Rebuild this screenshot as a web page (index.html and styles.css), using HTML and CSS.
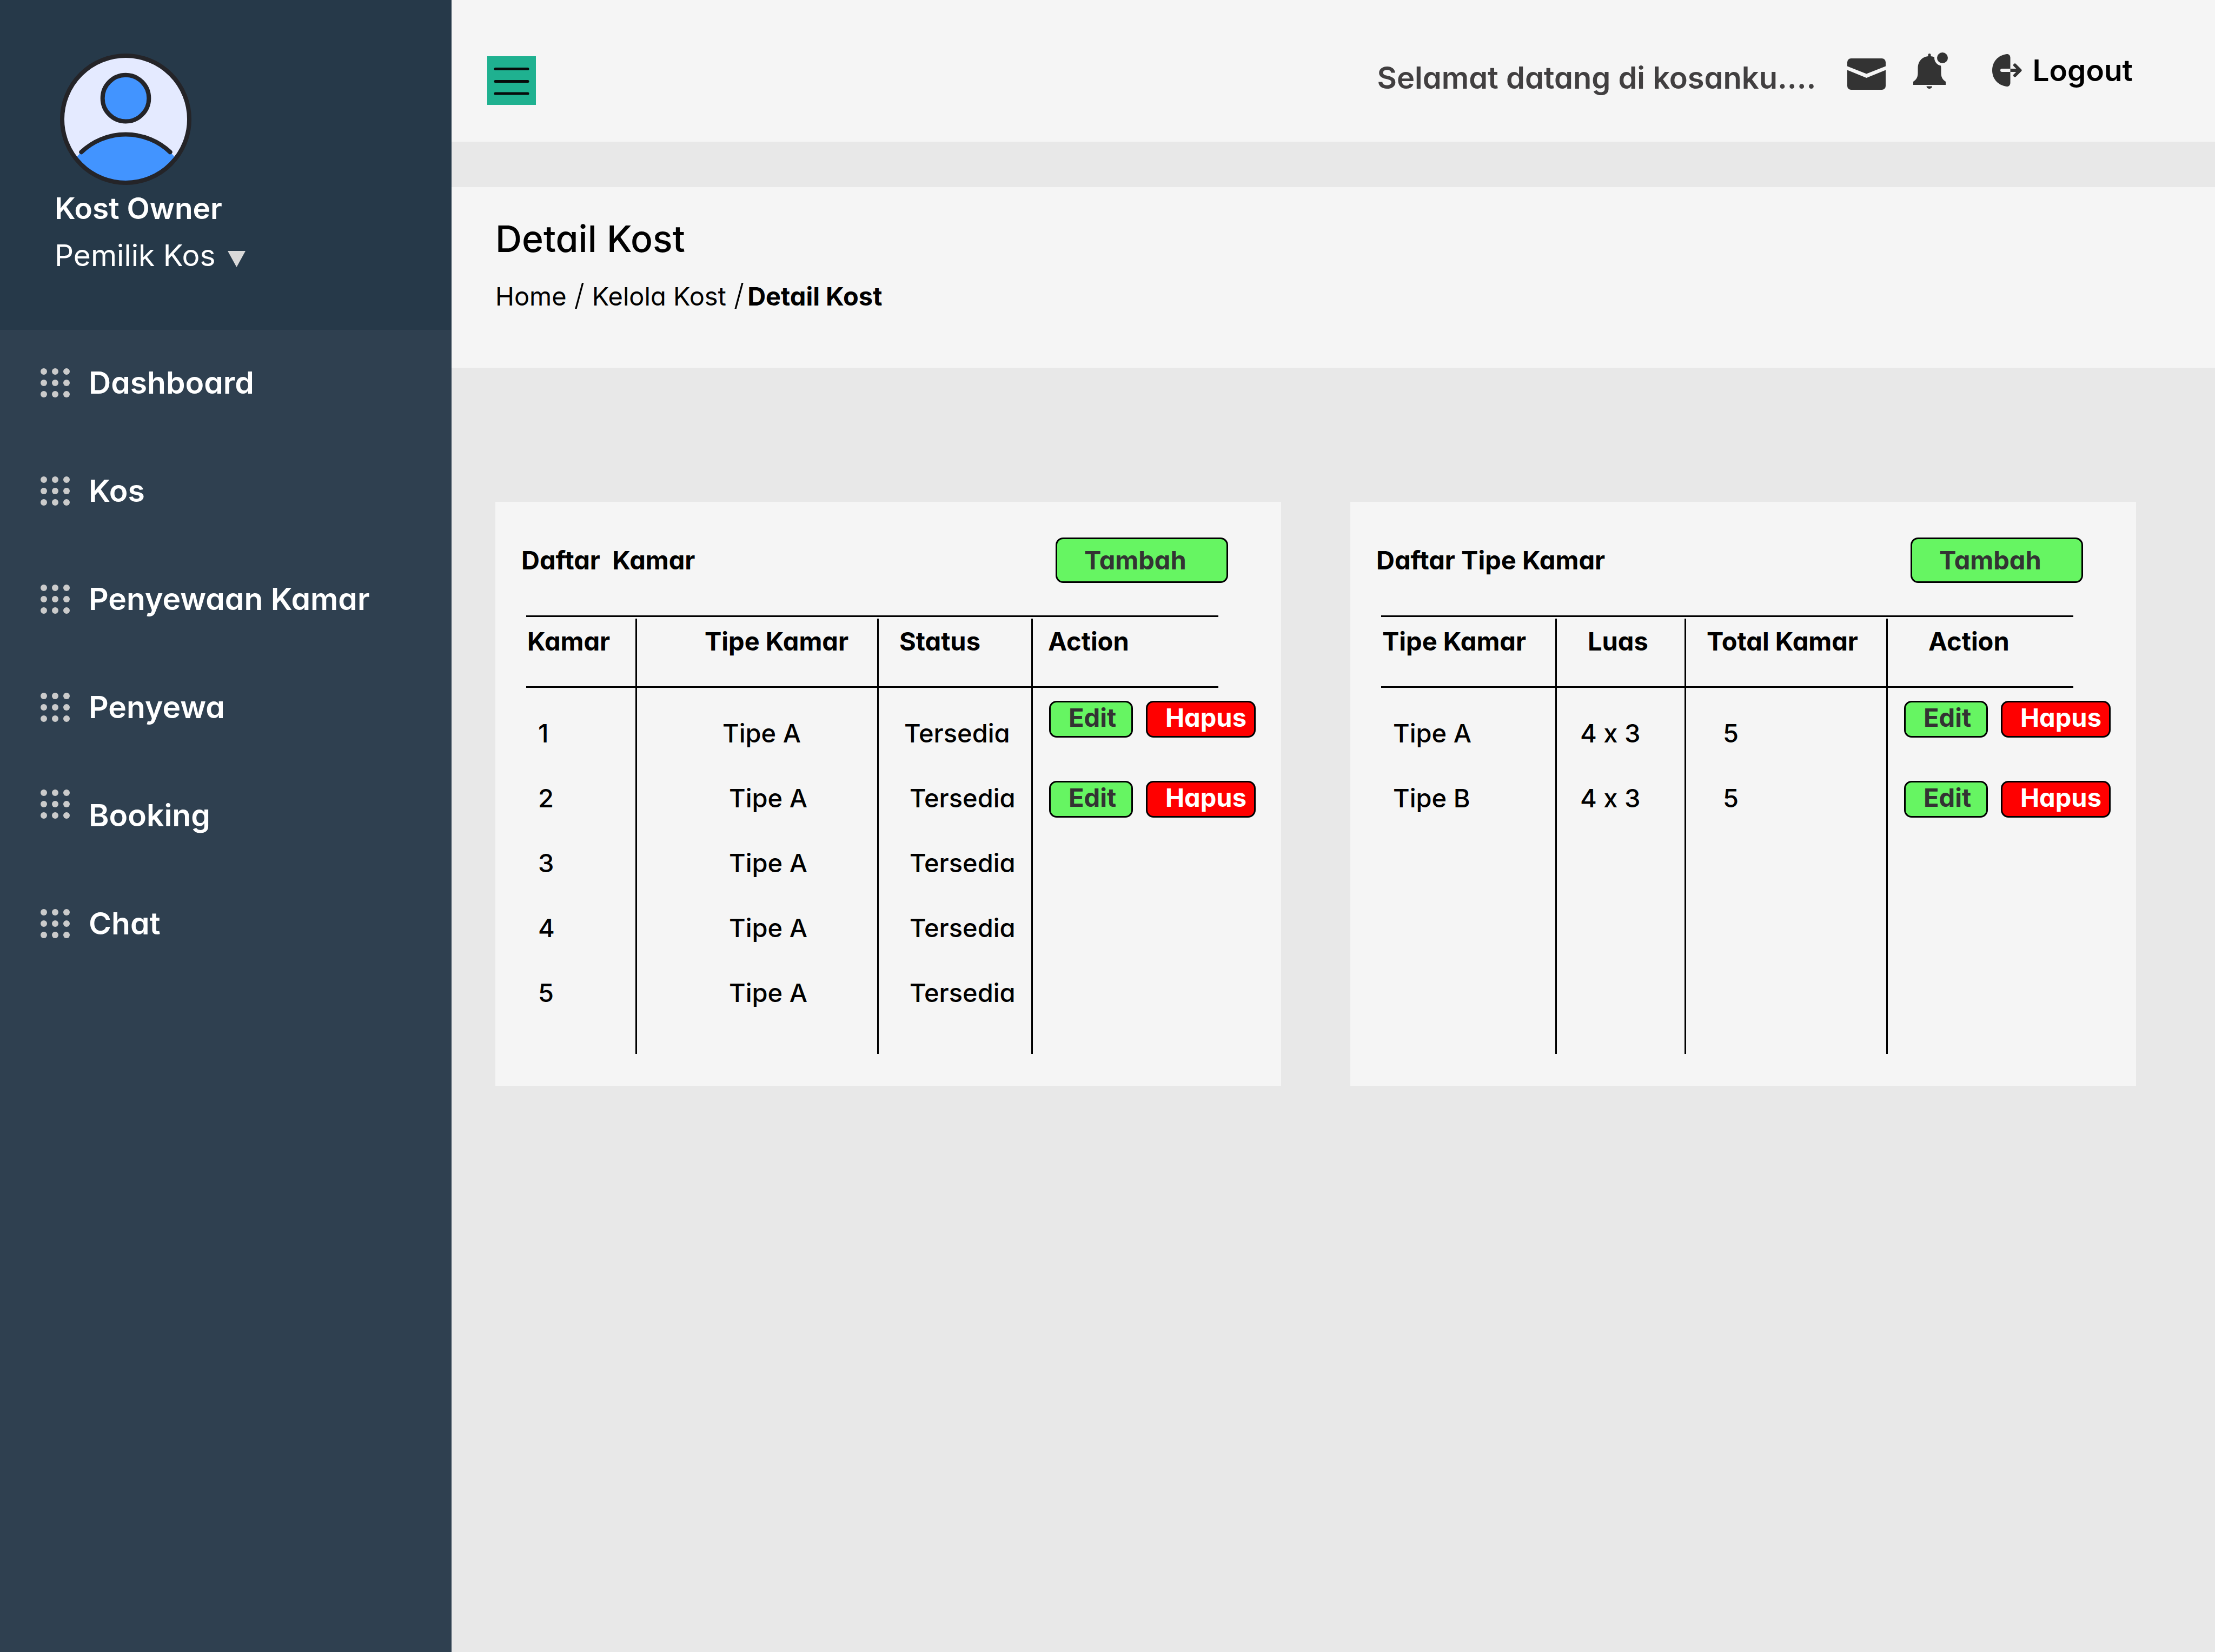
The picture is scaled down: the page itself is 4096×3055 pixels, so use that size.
FILE: index.html
```html
<!DOCTYPE html>
<html lang="id">
<head>
<meta charset="utf-8">
<meta name="viewport" content="width=device-width, initial-scale=1">
<title>Detail Kost</title>
<link rel="stylesheet" href="styles.css">
</head>
<body>
<svg class="sprite" aria-hidden="true">
  <symbol id="dots" viewBox="0 0 54 54">
    <circle cx="6" cy="6" r="6"/><circle cx="27" cy="6" r="6"/><circle cx="48" cy="6" r="6"/>
    <circle cx="6" cy="27" r="6"/><circle cx="27" cy="27" r="6"/><circle cx="48" cy="27" r="6"/>
    <circle cx="6" cy="48" r="6"/><circle cx="27" cy="48" r="6"/><circle cx="48" cy="48" r="6"/>
  </symbol>
</svg>
<div class="layout">
  <aside class="sidebar">
    <div class="profile">
      <svg class="avatar" viewBox="0 0 244 244" role="img" aria-label="Kost Owner">
        <clipPath id="face"><circle cx="122" cy="122" r="118"/></clipPath>
        <circle cx="122" cy="122" r="118" fill="#e4eaff"/>
        <circle cx="122" cy="270" r="120" fill="#4294ff" clip-path="url(#face)"/>
        <g stroke="#242428" stroke-width="8" stroke-linecap="round">
          <circle cx="122" cy="83" r="43" fill="#4294ff"/>
          <path d="M39.500 183A120 120 0 0 1 204.500 183" fill="none"/>
          <circle cx="122" cy="122" r="118" fill="none"/>
        </g>
      </svg>
      <p class="owner">Kost Owner</p>
      <button class="role" type="button">Pemilik Kos
        <svg class="caret" viewBox="0 0 33 30" aria-hidden="true"><path d="M0 0h33L16.500 30z"/></svg>
      </button>
    </div>
    <nav>
      <ul class="menu">
        <li><a href="#"><svg class="dots"><use href="#dots"/></svg>Dashboard</a></li>
        <li><a href="#"><svg class="dots"><use href="#dots"/></svg>Kos</a></li>
        <li><a href="#"><svg class="dots"><use href="#dots"/></svg>Penyewaan Kamar</a></li>
        <li><a href="#"><svg class="dots"><use href="#dots"/></svg>Penyewa</a></li>
        <li><a href="#"><svg class="dots dots-top"><use href="#dots"/></svg>Booking</a></li>
        <li><a href="#"><svg class="dots"><use href="#dots"/></svg>Chat</a></li>
      </ul>
    </nav>
  </aside>

  <div class="page">
    <header class="topbar">
      <button class="toggle" type="button" aria-label="Menu">
        <svg viewBox="0 0 90 90"><path d="M15 23.500h60M15 46.500h60M15 69h60" stroke="#060b0a" stroke-width="5" stroke-linecap="round"/></svg>
      </button>
      <p class="welcome">Selamat datang di kosanku....</p>
      <a class="mail" href="#" aria-label="Pesan">
        <svg viewBox="0 0 71 58"><path d="M7 0h57a7 7 0 0 1 7 7v7.500L35.500 28.500 0 14.500V7a7 7 0 0 1 7-7z"/><path d="M0 21.500 35.500 36 71 21.500V51a7 7 0 0 1-7 7H7a7 7 0 0 1-7-7z"/></svg>
      </a>
      <a class="bell" href="#" aria-label="Notifikasi">
        <svg viewBox="0 0 64 67"><path d="M27.500 7V4.500a2.500 2.500 0 0 1 5 0V7C44 8 51.500 17 51.500 29v9c0 9 4 13 8.500 16v6H0v-6c4.500-3 8.500-7 8.500-16v-9C8.500 17 16 8 27.500 7z"/><circle cx="54" cy="10" r="15" fill="#f5f5f5"/><circle cx="54" cy="10" r="10"/><path d="M24.500 62.500H35a5.200 4.500 0 0 1-10.500 0z"/></svg>
      </a>
      <a class="logout" href="#">
        <svg viewBox="0 0 55 60"><path d="M27 0c4-.4 6.500 3 6.500 7v46c0 4-2.500 7.400-6.500 7C11 58 0 46 0 30S11 2 27 0z"/><path d="M18 30h15.500" stroke="#f5f5f5" stroke-width="6" stroke-linecap="round"/><path d="M33.500 27H48v6H33.500z"/><path d="M42 20.500 51.500 30 42 39.500" fill="none" stroke="#333" stroke-width="6" stroke-linecap="round" stroke-linejoin="round"/></svg>
        Logout
      </a>
    </header>

    <section class="heading">
      <h1>Detail Kost</h1>
      <nav aria-label="Breadcrumb">
        <ol class="crumbs">
          <li><a href="#">Home</a></li>
          <li><a href="#">Kelola Kost</a></li>
          <li aria-current="page">Detail Kost</li>
        </ol>
      </nav>
    </section>

    <main class="cards">
      <section class="card">
        <div class="card-head">
          <h2>Daftar&nbsp; Kamar</h2>
          <button class="btn add" type="button">Tambah</button>
        </div>
        <div class="table-box">
          <table class="rooms">
            <colgroup><col><col><col><col></colgroup>
            <thead><tr><th>Kamar</th><th>Tipe Kamar</th><th>Status</th><th>Action</th></tr></thead>
            <tbody>
              <tr><td>1</td><td>Tipe A</td><td>Tersedia</td><td><div class="actions"><button class="btn edit" type="button">Edit</button><button class="btn delete" type="button">Hapus</button></div></td></tr>
              <tr><td>2</td><td>Tipe A</td><td>Tersedia</td><td><div class="actions"><button class="btn edit" type="button">Edit</button><button class="btn delete" type="button">Hapus</button></div></td></tr>
              <tr><td>3</td><td>Tipe A</td><td>Tersedia</td><td></td></tr>
              <tr><td>4</td><td>Tipe A</td><td>Tersedia</td><td></td></tr>
              <tr><td>5</td><td>Tipe A</td><td>Tersedia</td><td></td></tr>
              <tr class="filler"><td></td><td></td><td></td><td></td></tr>
            </tbody>
          </table>
        </div>
      </section>

      <section class="card">
        <div class="card-head">
          <h2>Daftar Tipe Kamar</h2>
          <button class="btn add" type="button">Tambah</button>
        </div>
        <div class="table-box">
          <table class="types">
            <colgroup><col><col><col><col></colgroup>
            <thead><tr><th>Tipe Kamar</th><th>Luas</th><th>Total Kamar</th><th>Action</th></tr></thead>
            <tbody>
              <tr><td>Tipe A</td><td>4 x 3</td><td>5</td><td><div class="actions"><button class="btn edit" type="button">Edit</button><button class="btn delete" type="button">Hapus</button></div></td></tr>
              <tr><td>Tipe B</td><td>4 x 3</td><td>5</td><td><div class="actions"><button class="btn edit" type="button">Edit</button><button class="btn delete" type="button">Hapus</button></div></td></tr>
              <tr class="filler"><td></td><td></td><td></td><td></td></tr>
            </tbody>
          </table>
        </div>
      </section>
    </main>
  </div>
</div>
</body>
</html>
```
FILE: styles.css
```css
* { box-sizing: border-box; }

body {
  margin: 0;
  background: #e8e8e8;
  color: #000;
  font-family: Inter, "Open Sans", sans-serif;
  font-size: 47px;
  font-weight: 500;
  line-height: 60px;
  /* single-storey a, no automatic multiplication sign */
  font-feature-settings: "cv11", "calt" 0;
}

h1, h2, p, ul, ol { margin: 0; padding: 0; }
ul, ol { list-style: none; }
a { color: inherit; text-decoration: none; }
button { font: inherit; font-feature-settings: inherit; color: inherit; cursor: pointer; }
svg { display: block; flex: none; }
.sprite { position: absolute; width: 0; height: 0; }

.layout { display: flex; min-height: 100vh; }

/* Sidebar */
.sidebar { flex: none; width: 835px; background: #2f4050; color: #fff; }
.profile { padding: 99px 101px 94px; background: #263949; font-size: 55px; line-height: 87px; }
.avatar { width: 243px; height: 243px; margin-left: 10px; }
.owner { font-weight: 600; }
.role {
  display: flex; align-items: center; gap: 23px;
  padding: 0; border: 0; background: none; font-weight: 400;
}
.caret { width: 33px; height: 30px; margin-top: 12px; fill: #d9d9d9; }

.menu { display: grid; gap: 104px; padding: 50px 75px; }
.menu a { display: flex; align-items: center; gap: 35px; font-size: 57px; font-weight: 600; line-height: 96px; }
.dots { width: 54px; height: 54px; fill: #cbcbcb; }
.dots-top { align-self: flex-start; }

/* Top bar */
.page { flex: 1; min-width: 0; }
.topbar {
  display: flex; align-items: flex-start;
  height: 262px; padding: 97px 152px 0 66px;
  background: #f5f5f5; fill: #333;
}
.toggle { width: 90px; height: 90px; margin-top: 7px; padding: 0; border: 0; background: #1fb190; }
.welcome { margin-left: auto; color: #413f40; font-size: 56px; font-weight: 600; line-height: 95px; }
.mail { margin-left: 58px; padding-top: 11px; }
.mail svg { width: 71px; height: 58px; }
.bell { margin-left: 51px; }
.bell svg { width: 64px; height: 67px; }
.logout { display: flex; align-items: center; gap: 19px; margin-left: 82px; font-size: 55px; font-weight: 600; line-height: 66px; }
.logout svg { width: 55px; height: 60px; }

/* Page heading */
.heading { margin-top: 84px; padding: 45px 81px 92px; background: #f5f5f5; }
.heading h1 { font-size: 68px; font-weight: 500; line-height: 100px; }
.crumbs { display: flex; margin-top: 17px; font-weight: 400; line-height: 80px; }
.crumbs li + li::before { content: "/"; margin: 0 14px; font-size: 55px; font-weight: 300; line-height: 1; }
.crumbs [aria-current] { font-weight: 700; }
.crumbs li[aria-current]::before { margin: 0 6px 0 14px; }

/* Cards */
.cards { display: grid; grid-template-columns: 1fr 1fr; gap: 128px; padding: 248px 146px 128px 81px; }
.card { padding: 66px 98px 59px 48px; background: #f5f5f5; }
.card-head { display: flex; align-items: center; justify-content: space-between; margin-bottom: 60px; }
.card h2 { font-size: 47px; font-weight: 700; line-height: 60px; }

.btn {
  flex: none; padding: 0 0 6px 33px;
  border: 3px solid #000; border-radius: 14px;
  font-weight: 700; line-height: 56px; text-align: left; white-space: nowrap;
}
.add { width: 319px; height: 84px; padding: 0 0 0 50px; background: #66f562; color: #333; }
.edit { width: 155px; height: 68px; background: #66f562; color: #333; }
.delete { width: 203px; height: 68px; background: #f00; color: #fff; }

.table-box { margin: 0 18px 0 9px; padding-top: 3px; border-top: 3px solid #000; }
table { width: 100%; height: 805px; table-layout: fixed; border-spacing: 0; }
th, td { padding: 0; text-align: left; vertical-align: top; white-space: nowrap; }
th { padding: 12px 0 53px; border-bottom: 3px solid #000; font-weight: 700; }
td { height: 120px; padding: 30px 0; }
tbody tr:first-child td { height: 144px; padding-top: 54px; }
th:not(:last-child), td:not(:last-child) { border-right: 3px solid #000; }
tbody tr.filler td { height: auto; padding: 0; }
tbody td:last-child { padding: 28px 0 0 30px; }
tbody tr:first-child td:last-child { padding: 24px 0 0 30px; }
.actions { display: flex; gap: 24px; }

.rooms col:nth-child(1) { width: 205px; }
.rooms col:nth-child(2) { width: 447px; }
.rooms col:nth-child(3) { width: 285px; }
.rooms th:nth-child(1) { padding-left: 2px; }
.rooms td:nth-child(1) { padding-left: 22px; }
.rooms th:nth-child(2) { padding-left: 125px; }
.rooms td:nth-child(2) { padding-left: 170px; }
.rooms th:nth-child(3) { padding-left: 38px; }
.rooms td:nth-child(3) { padding-left: 57px; }
.rooms tr:first-child td:nth-child(2) { padding-left: 158px; }
.rooms tr:first-child td:nth-child(3) { padding-left: 47px; }
.rooms th:nth-child(4) { padding-left: 28px; }

.types col:nth-child(1) { width: 325px; }
.types col:nth-child(2) { width: 239px; }
.types col:nth-child(3) { width: 373px; }
.types th:nth-child(1) { padding-left: 2px; }
.types td:nth-child(1) { padding-left: 22px; }
.types th:nth-child(2) { padding-left: 57px; }
.types td:nth-child(2) { padding-left: 43px; }
.types th:nth-child(3) { padding-left: 38px; }
.types td:nth-child(3) { padding-left: 68px; }
.types th:nth-child(4) { padding-left: 75px; }
```
